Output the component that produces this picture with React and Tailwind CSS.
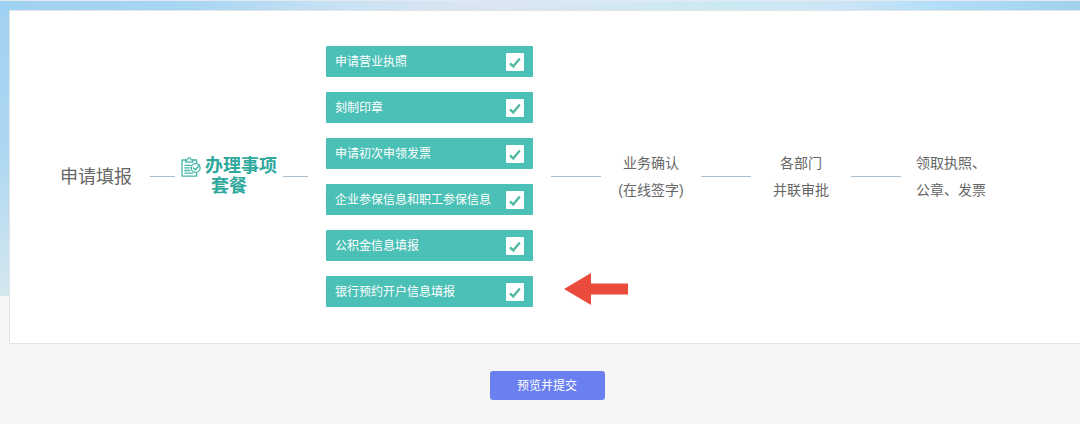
import { useState } from 'react'

const services = [
  '申请营业执照',
  '刻制印章',
  '申请初次申领发票',
  '企业参保信息和职工参保信息',
  '公积金信息填报',
  '银行预约开户信息填报',
]

function ClipboardIcon() {
  return (
    <svg viewBox="0 0 20 20" className="inline-block size-5 mr-1 align-[-5px]" fill="none" stroke="#45b5a8" strokeWidth="1.3" strokeLinecap="round" strokeLinejoin="round" aria-hidden="true">
      <path d="M4.800 3H1v16.200h14.600v-3.400M11.800 3h3.800v3.400" />
      <path d="M4.800 5.200V2.800h1.700C6.700 1.400 7.400.7 8.300.7s1.600.7 1.800 2.100h1.700v2.400z" />
      <path d="M3.800 8.300h6M3.800 10.900h5M3.800 13.500h5M3.800 16.200h8" />
      <circle cx="14.700" cy="11" r="4.400" />
      <path d="M12.500 11l1.700 1.800 4.400-4.800" strokeWidth="1.500" />
    </svg>
  )
}

function Arrow() {
  return (
    <svg viewBox="0 0 64 32" className="absolute left-full bottom-0.5 ml-[31px] w-16 h-8" aria-hidden="true">
      <path d="M0 16L27 0v10.500h37v11H27V32z" fill="#e94b3c" />
    </svg>
  )
}

function Service({ name, children }) {
  const [checked, setChecked] = useState(true)

  return (
    <li className="relative">
      <label className="flex items-center justify-between h-[31px] px-[9px] rounded-[1px] bg-[#4bc0b6] text-xs text-white whitespace-nowrap">
        {name}
        <span className="grid">
          <input
            type="checkbox"
            checked={checked}
            onChange={(e) => setChecked(e.target.checked)}
            className="col-start-1 row-start-1 appearance-none size-[18px] rounded-[1px] bg-white"
          />
          {checked && (
            <svg viewBox="0 0 18 18" className="col-start-1 row-start-1 size-[18px] pointer-events-none" fill="none" stroke="#4fb9a3" strokeWidth="2.400" aria-hidden="true">
              <path d="M4 10.400l3.200 3L13.800 5.400" />
            </svg>
          )}
        </span>
      </label>
      {children}
    </li>
  )
}

function Line({ className }) {
  return <li aria-hidden="true" className={`shrink-0 h-px bg-[#a9becf] ${className}`} />
}

export default function App() {
  return (
    <div className="bg-white font-['Liberation_Sans','Noto_Sans_CJK_SC',sans-serif] text-[#666]">
      <main className="pt-2.5 pb-6 bg-[#f6f6f6] bg-[linear-gradient(#e3e9f0,#e3e9f0),linear-gradient(90deg,#9fd1f2_0%,#a9d6f3_18%,#c9e2f4_32%,#dce6f3_45%,#cbeaf4_68%,#cde4f6_78%,#b3dff8_86%,#a2d0ec_100%),linear-gradient(#a1d1f3,#acd7f2_50%,#d5e7ee)] bg-[size:100%_1px,100%_10px,100%_296px] bg-no-repeat">
        <section className="ml-[9px] pt-[35px] pb-9 pl-[50px] bg-white border border-r-0 border-[#e2e4e6]">
          <ol className="flex items-center whitespace-nowrap">
            <li className="text-lg">申请填报</li>
            <Line className="w-[25px] ml-[18px]" />
            <li className="mx-1.5 text-center text-lg leading-[19px] font-bold text-[#2fa99c]">
              <ClipboardIcon />
              办理事项
              <br />
              套餐
            </li>
            <Line className="w-[25px]" />
            <li className="w-[207px] mx-[18px] shrink-0">
              <ul className="flex flex-col gap-[15px]">
                {services.map((name, i) => (
                  <Service key={name} name={name}>
                    {i === services.length - 1 && <Arrow />}
                  </Service>
                ))}
              </ul>
            </li>
            <Line className="w-[50px]" />
            <li className="w-[100px] text-center text-sm leading-[27px]">
              业务确认
              <br />
              (在线签字)
            </li>
            <Line className="w-[50px]" />
            <li className="w-[100px] text-center text-sm leading-[27px]">
              各部门
              <br />
              并联审批
            </li>
            <Line className="w-[50px]" />
            <li className="ml-[15px] text-sm leading-[27px]">
              领取执照、
              <br />
              公章、发票
            </li>
          </ol>
        </section>
        <div className="flex justify-center mt-[27px] pl-3.5">
          <button type="button" className="h-[29px] w-[115px] rounded-[3px] bg-[#6a80f0] text-xs text-white">
            预览并提交
          </button>
        </div>
      </main>
    </div>
  )
}
